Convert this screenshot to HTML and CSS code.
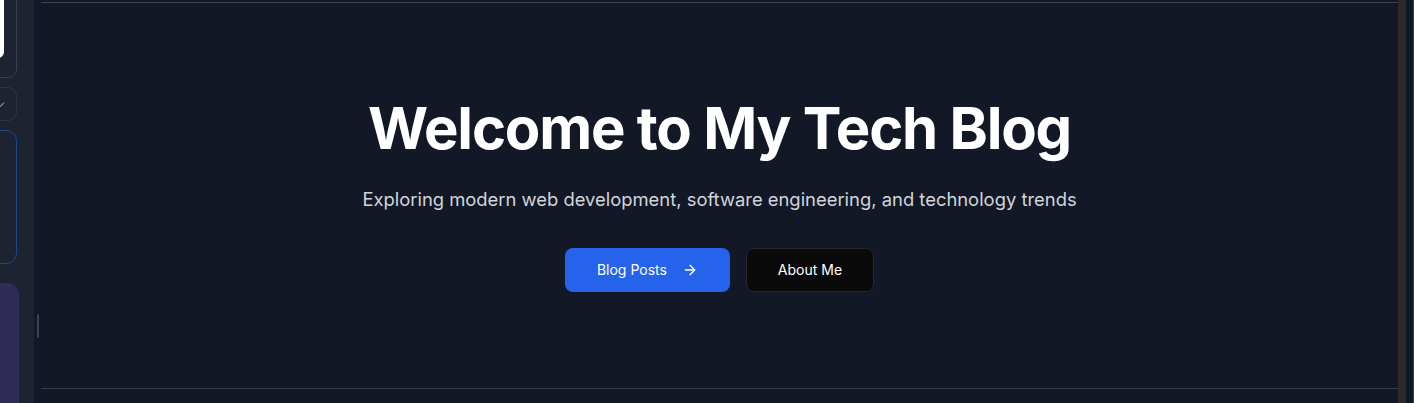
FILE: index.html
```html
<!DOCTYPE html>
<html lang="en">
<head>
<meta charset="utf-8">
<title>My Tech Blog</title>
<link rel="stylesheet" href="styles.css">
</head>
<body>
<div class="app">
  <aside class="side">
    <div class="side-inner">
      <div class="card card-input"><div class="textarea"></div></div>
      <div class="card card-check">
        <svg class="check" width="8" height="8" viewBox="0 0 24 24" fill="none" stroke="currentColor" stroke-width="3" stroke-linecap="round" stroke-linejoin="round"><path d="M20 6 9 17l-5-5"/></svg>
      </div>
      <div class="card card-blue"><span class="dot"></span></div>
      <div class="card card-purple"></div>
    </div>
  </aside>
  <div class="divider"><span class="handle"></span></div>
  <main class="main">
    <section class="hero">
      <h1 class="title">Welcome to My Tech Blog</h1>
      <p class="subtitle">Exploring modern web development, software engineering, and technology trends</p>
      <div class="actions">
        <a class="btn btn-primary" href="#">Blog Posts
          <svg class="arrow" width="16" height="16" viewBox="0 0 24 24" fill="none" stroke="currentColor" stroke-width="2" stroke-linecap="round" stroke-linejoin="round"><path d="M5 12h14"/><path d="m12 5 7 7-7 7"/></svg>
        </a>
        <a class="btn btn-dark" href="#">About Me</a>
      </div>
    </section>
  </main>
  <div class="scrollbar"></div>
  <div class="edge"></div>
</div>
</body>
</html>
```
FILE: styles.css
```css
* { box-sizing: border-box; }
html, body { margin: 0; padding: 0; height: 100%; }
body {
  background: #111827;
  font-family: Inter, "Noto Sans", "Liberation Sans", sans-serif;
  overflow: hidden;
}
.app {
  display: flex;
  height: 403px;
  width: 1414px;
}
.side {
  width: 34px;
  flex: none;
  background: #1e2331;
  overflow: hidden;
}
.side-inner {
  width: 200px;
  margin-left: -183px;
  margin-top: -22px;
  display: flex;
  flex-direction: column;
  gap: 9px;
}
.card {
  border-radius: 9px;
  flex: none;
}
.card-input {
  height: 100px;
  border: 1px solid #384152;
  padding: 10px 12px 19px 12px;
}
.textarea {
  height: 100%;
  background: #ffffff;
  border-radius: 6px;
}
.card-check {
  height: 34px;
  border: 1px solid #2c3343;
  display: flex;
  align-items: center;
  justify-content: flex-end;
  padding-right: 11px;
}
.check {
  color: #d1d5db;
  margin-top: 1px;
}
.card-blue {
  height: 134px;
  border: 1px solid #1c4a86;
  border-radius: 11px;
  position: relative;
}
.dot {
  position: absolute;
  right: 16px;
  top: 22px;
  width: 2px;
  height: 2px;
  background: #e5e7eb;
}
.card-purple {
  margin-top: 10px;
  width: 202px;
  height: 160px;
  background: #2f2d55;
  border-radius: 12px;
}
.divider {
  width: 7px;
  flex: none;
  background: #121827;
  display: flex;
  justify-content: center;
  padding-top: 314px;
}
.handle {
  width: 2px;
  height: 24px;
  background: #3b4256;
  border-radius: 1px;
}
.main {
  width: 1357px;
  flex: none;
  background: #121826;
  padding-top: 2px;
}
.hero {
  height: 387px;
  border-top: 1px solid #3d4553;
  border-bottom: 1px solid #2e3c46;
  display: flex;
  flex-direction: column;
  align-items: center;
  justify-content: center;
  padding-bottom: 2px;
}
.title {
  margin: 0;
  color: #ffffff;
  font-size: 58px;
  line-height: 60px;
  font-weight: 700;
  letter-spacing: -1.2px;
}
.subtitle {
  margin: 27px 0 0 0;
  color: #d1d5db;
  font-size: 18.4px;
  line-height: 28px;
}
.actions {
  margin-top: 35px;
  display: flex;
  gap: 16px;
}
.btn {
  display: inline-flex;
  align-items: center;
  height: 44px;
  border-radius: 8px;
  font-size: 14px;
  font-weight: 400;
  text-decoration: none;
  color: #ffffff;
}
.btn-primary {
  background: #2563eb;
  padding: 0 32px 0 32px;
}
.arrow {
  margin-left: 15px;
}
.btn-dark {
  background: #0a0a0a;
  border: 1px solid #27272a;
  padding: 0 31px;
}
.scrollbar {
  width: 8px;
  flex: none;
  background: #2a2a2a;
}
.edge {
  width: 8px;
  flex: none;
  background: #111827;
  border-right: 1px solid #3a4150;
}
```
